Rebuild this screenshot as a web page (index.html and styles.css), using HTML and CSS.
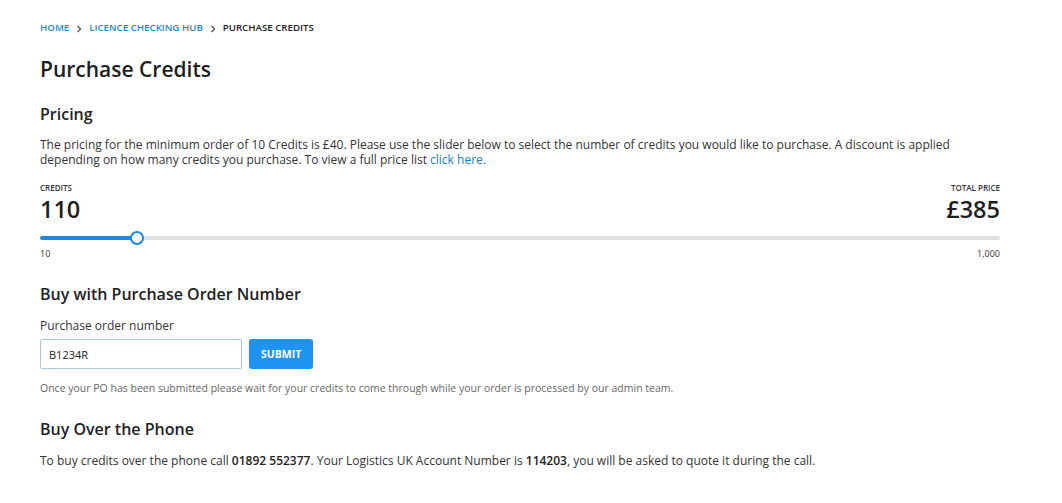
FILE: index.html
```html
<!DOCTYPE html>
<html lang="en">
<head>
<meta charset="utf-8">
<title>Purchase Credits</title>
<link rel="stylesheet" href="styles.css">
</head>
<body>
<main class="page">
  <nav class="crumbs">
    <a href="#">Home</a>
    <svg class="chev" viewBox="0 0 6 8" width="6" height="8"><path d="M1.5 1 L4.5 4 L1.5 7" fill="none" stroke="#555" stroke-width="1.4"/></svg>
    <a href="#">Licence Checking Hub</a>
    <svg class="chev" viewBox="0 0 6 8" width="6" height="8"><path d="M1.5 1 L4.5 4 L1.5 7" fill="none" stroke="#555" stroke-width="1.4"/></svg>
    <span class="current">Purchase Credits</span>
  </nav>

  <h1 class="title">Purchase Credits</h1>

  <section class="section pricing">
    <h2 class="heading">Pricing</h2>
    <p class="text">The pricing for the minimum order of 10 Credits is £40. Please use the slider below to select the number of credits you would like to purchase. A discount is applied depending on how many credits you purchase. To view a full price list <a class="link" href="#">click here.</a></p>

    <div class="readout">
      <div class="stat">
        <span class="stat-label">Credits</span>
        <span class="stat-value">110</span>
      </div>
      <div class="stat stat-right">
        <span class="stat-label">Total price</span>
        <span class="stat-value">£385</span>
      </div>
    </div>
    <div class="slider">
      <div class="track"><div class="fill" style="width:10.1%"></div><div class="thumb" style="left:10.1%"></div></div>
    </div>
    <div class="scale"><span>10</span><span>1,000</span></div>
  </section>

  <section class="section po">
    <h2 class="heading">Buy with Purchase Order Number</h2>
    <label class="field-label" for="po">Purchase order number</label>
    <div class="po-row">
      <input id="po" class="input" type="text" value="B1234R">
      <button class="btn" type="button">Submit</button>
    </div>
    <p class="note">Once your PO has been submitted please wait for your credits to come through while your order is processed by our admin team.</p>
  </section>

  <section class="section phone">
    <h2 class="heading">Buy Over the Phone</h2>
    <p class="text">To buy credits over the phone call <strong>01892 552377</strong>. Your Logistics UK Account Number is <strong>114203</strong>, you will be asked to quote it during the call.</p>
  </section>
</main>
</body>
</html>
```

FILE: styles.css
```css
* { box-sizing: border-box; }
html, body { margin: 0; padding: 0; background: #fff; }
body {
  font-family: "Open Sans", "Liberation Sans", sans-serif;
  color: #222;
}
.page {
  width: 960px;
  margin-left: 40px;
  padding-top: 20px;
}
.crumbs {
  display: flex;
  align-items: center;
  gap: 7px;
  font-size: 9.7px;
  font-weight: 600;
  text-transform: uppercase;
  line-height: 16px;
}
.crumbs a { color: #1a8ad4; text-decoration: none; }
.crumbs .current { color: #222; }
.chev { margin: 1px 0 0; }
.title {
  margin: 19px 0 0;
  font-size: 21px;
  font-weight: 600;
  line-height: 28px;
  color: #1e1e1e;
}
.heading {
  margin: 0;
  font-size: 16px;
  font-weight: 600;
  line-height: 22px;
  color: #222;
}
.pricing { margin-top: 20px; }
.text {
  margin: 12px 0 0;
  font-size: 12px;
  line-height: 15px;
  color: #333;
}
.text strong { font-weight: 600; color: #222; }
.link { color: #1a7fb8; text-decoration: none; line-height: 15px; }
.readout {
  display: flex;
  justify-content: space-between;
  margin-top: 16px;
}
.stat { display: flex; flex-direction: column; }
.stat-right { align-items: flex-end; }
.stat-label {
  font-size: 8px;
  font-weight: 600;
  text-transform: uppercase;
  line-height: 10px;
  color: #333;
}
.stat-value {
  font-size: 23.5px;
  font-weight: 600;
  line-height: 30px;
  color: #1e1e1e;
  margin-top: 1px;
}
.slider { padding: 12px 0 8px; }
.track {
  position: relative;
  height: 4px;
  border-radius: 2px;
  background: #dde0e3;
}
.fill {
  height: 4px;
  border-radius: 2px;
  background: #1a8ae6;
}
.thumb {
  position: absolute;
  top: 50%;
  width: 14px;
  height: 14px;
  margin: -7px 0 0 -7px;
  border: 2.5px solid #1a8ae6;
  border-radius: 50%;
  background: #fff;
}
.scale {
  display: flex;
  justify-content: space-between;
  font-size: 9px;
  line-height: 12px;
  color: #333;
}
.po { margin-top: 23px; }
.field-label {
  display: block;
  margin-top: 13px;
  font-size: 12px;
  line-height: 16px;
  color: #333;
}
.po-row {
  display: flex;
  gap: 7px;
  margin-top: 5px;
}
.input {
  width: 202px;
  height: 30px;
  padding: 0 8px;
  border: 1px solid #a9c8e6;
  border-radius: 2px;
  font-family: inherit;
  font-size: 11px;
  color: #222;
  outline: none;
}
.btn {
  height: 30px;
  padding: 0 12px;
  border: 0;
  border-radius: 3px;
  background: #1e93f2;
  color: #fff;
  font-family: inherit;
  font-size: 10.5px;
  font-weight: 700;
  text-transform: uppercase;
}
.note {
  margin: 12px 0 0;
  font-size: 10.5px;
  line-height: 14px;
  color: #666;
}
.phone { margin-top: 23px; }
.phone .text { margin-top: 13px; }
```
